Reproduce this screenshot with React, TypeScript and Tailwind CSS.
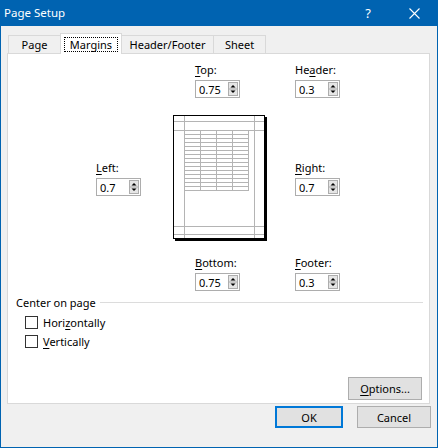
import React from "react";

function Spin() {
  return (
    <svg width="10" height="14" viewBox="0 0 10 14" className="block shrink-0">
      <rect x="0.5" y="0.5" width="9" height="13" fill="#e5e5e5" stroke="#adadad" />
      <line x1="1" y1="7" x2="9" y2="7" stroke="#adadad" />
      <path d="M2.5 5.5 L5 3 L7.5 5.5 Z" fill="#000" />
      <path d="M2.5 8.5 L5 11 L7.5 8.5 Z" fill="#000" />
    </svg>
  );
}

function Field({ label, value }: { label: React.ReactNode; value: string }) {
  return (
    <div className="flex flex-col w-[45px]">
      <div className="h-[15px] leading-[15px] text-[11px] text-black whitespace-nowrap">{label}</div>
      <div className="mt-[3px] h-[18px] border border-[#adadad] bg-white flex items-center justify-between pl-[3px] pr-[1px]">
        <span className="text-[11px] leading-none text-black">{value}</span>
        <Spin />
      </div>
    </div>
  );
}

function Preview() {
  const rows: number[] = [];
  for (let y = 15; y <= 75; y += 4) rows.push(y);
  const cols = [11, 27, 43, 59, 75];
  return (
    <svg width="94" height="126" viewBox="0 0 94 126" className="block shrink-0" shapeRendering="crispEdges">
      <rect x="0.5" y="0.5" width="91" height="123" fill="#fff" stroke="#000" />
      <rect x="92" y="2" width="2" height="124" fill="#000" />
      <rect x="2" y="124" width="92" height="2" fill="#000" />
      <g stroke="#b4b4b4" strokeWidth="1">
        <line x1="11.5" y1="1" x2="11.5" y2="123" />
        <line x1="81.5" y1="1" x2="81.5" y2="123" />
        <line x1="1" y1="6.5" x2="91" y2="6.5" />
        <line x1="1" y1="15.5" x2="91" y2="15.5" />
        <line x1="1" y1="111.5" x2="91" y2="111.5" />
        <line x1="1" y1="119.5" x2="91" y2="119.5" />
        {rows.map((y) => (
          <line key={"r" + y} x1="11" y1={y + 0.5} x2="76" y2={y + 0.5} />
        ))}
        {cols.map((x) => (
          <line key={"c" + x} x1={x + 0.5} y1="15" x2={x + 0.5} y2="76" />
        ))}
      </g>
    </svg>
  );
}

function Check({ children }: { children: React.ReactNode }) {
  return (
    <div className="flex items-center h-[15px] pl-[17px]">
      <div className="w-[13px] h-[13px] border border-[#333] bg-white shrink-0" />
      <span className="ml-[5px] text-[11px] leading-[15px] text-black">{children}</span>
    </div>
  );
}

const U = ({ children }: { children: React.ReactNode }) => <span className="underline underline-offset-[2px]">{children}</span>;

export default function App() {
  return (
    <div className="w-[438px] h-[448px] bg-[#0063b1] flex flex-col px-px pb-px font-['Noto_Sans',sans-serif] select-none">
      <div className="h-[26px] flex items-center text-white shrink-0">
        <span className="pl-[3px] text-[11.5px] leading-none">Page Setup</span>
        <div className="flex-1" />
        <div className="w-[46px] h-[26px] flex items-center justify-center text-[13px] leading-none">?</div>
        <div className="w-[46px] h-[26px] flex items-center justify-center">
          <svg width="11" height="11" viewBox="0 0 11 11">
            <path d="M0.5 0.5 L10.5 10.5 M10.5 0.5 L0.5 10.5" stroke="#fff" strokeWidth="1.1" />
          </svg>
        </div>
      </div>
      <div className="flex-1 bg-[#f0f0f0] flex flex-col">
        <div className="mt-[7px] ml-[7px] h-[21px] flex items-end text-[11px] text-black">
          <div className="w-[52px] h-[19px] border-l border-t border-[#d9d9d9] flex items-center justify-center leading-none pb-[1px]">Page</div>
          <div className="relative z-10 w-[62px] h-[21px] bg-white border-x border-t border-[#d9d9d9] flex items-start justify-center pt-[3px]">
            <span className="border border-dotted border-black px-[5px] h-[15px] leading-[13px]">Margins</span>
          </div>
          <div className="w-[91px] h-[19px] border-t border-[#d9d9d9] flex items-center justify-center leading-none pb-[1px]">Header/Footer</div>
          <div className="w-[53px] h-[19px] border-x border-t border-[#d9d9d9] flex items-center justify-center leading-none pb-[1px]">Sheet</div>
        </div>
        <div className="ml-[6px] w-[423px] h-[351px] -mt-px bg-white border border-[#d9d9d9] flex flex-col">
          <div className="mt-[8px] flex pl-[187px]">
            <Field label={<><U>T</U>op:</>} value="0.75" />
            <div className="ml-[55px]">
              <Field label={<>He<U>a</U>der:</>} value="0.3" />
            </div>
          </div>
          <div className="mt-[17px] flex items-center pl-[88px]">
            <Field label={<><U>L</U>eft:</>} value="0.7" />
            <div className="ml-[32px]">
              <Preview />
            </div>
            <div className="ml-[28px]">
              <Field label={<><U>R</U>ight:</>} value="0.7" />
            </div>
          </div>
          <div className="mt-[14px] flex pl-[187px]">
            <Field label={<><U>B</U>ottom:</>} value="0.75" />
            <div className="ml-[55px]">
              <Field label={<><U>F</U>ooter:</>} value="0.3" />
            </div>
          </div>
          <div className="mt-[4px] flex items-center pl-[8px] pr-[6px] h-[15px]">
            <span className="text-[11px] leading-[15px] text-black whitespace-nowrap">Center on page</span>
            <div className="ml-[4px] flex-1 h-px bg-[#dcdcdc]" />
          </div>
          <div className="mt-[5px]">
            <Check>Hori<U>z</U>ontally</Check>
          </div>
          <div className="mt-[4px]">
            <Check><U>V</U>ertically</Check>
          </div>
          <div className="mt-auto mb-[3px] mr-[7px] self-end w-[74px] h-[23px] bg-[#e1e1e1] border border-[#adadad] flex items-center justify-center text-[11px] text-black leading-none">
            <span><U>O</U>ptions...</span>
          </div>
        </div>
        <div className="mt-[2px] flex justify-end gap-[14px] pr-[6px]">
          <div className="w-[68px] h-[22px] bg-[#e1e1e1] border-2 border-[#0078d7] flex items-center justify-center text-[11px] text-black leading-none">OK</div>
          <div className="w-[74px] h-[22px] bg-[#e1e1e1] border border-[#adadad] flex items-center justify-center text-[11px] text-black leading-none">Cancel</div>
        </div>
      </div>
    </div>
  );
}
